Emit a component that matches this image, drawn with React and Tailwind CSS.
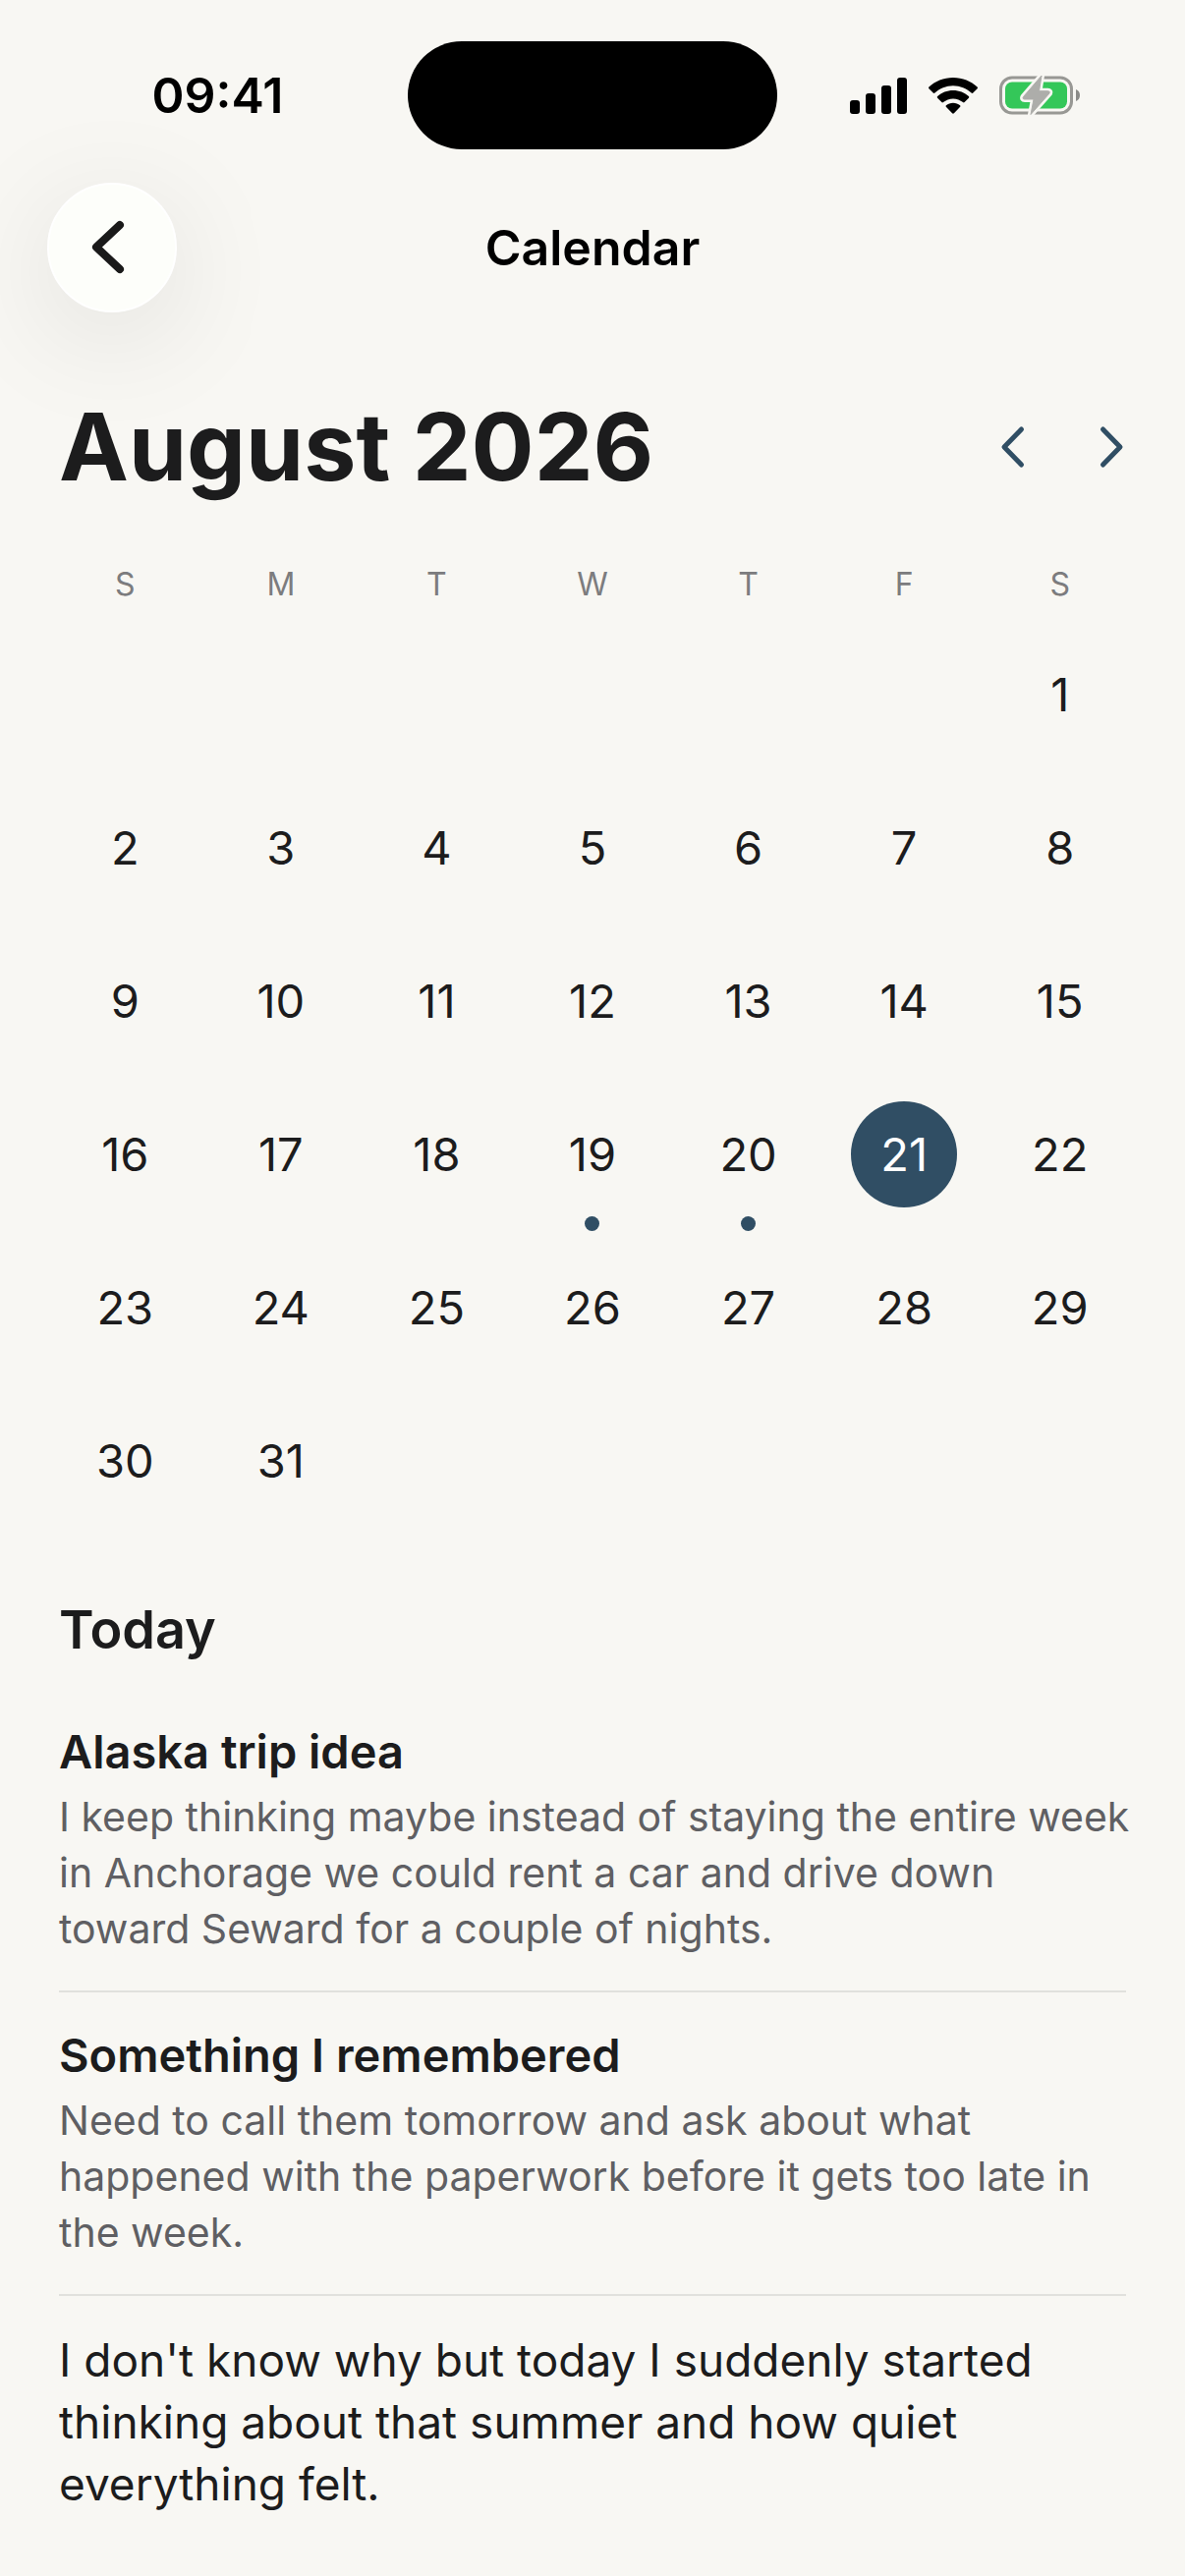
import { useState } from "react";
import clsx from "clsx";

const TODAY = new Date(2026, 7, 21);
const DAYS_WITH_ENTRIES = ["2026-7-19", "2026-7-20"];
const WEEKDAYS = ["Sunday", "Monday", "Tuesday", "Wednesday", "Thursday", "Friday", "Saturday"];

const ENTRIES = [
  {
    id: 1,
    title: "Alaska trip idea",
    body: "I keep thinking maybe instead of staying the entire week\nin Anchorage we could rent a car and drive down\ntoward Seward for a couple of nights.",
  },
  {
    id: 2,
    title: "Something I remembered",
    body: "Need to call them tomorrow and ask about what\nhappened with the paperwork before it gets too late in\nthe week.",
  },
  {
    id: 3,
    body: "I don't know why but today I suddenly started\nthinking about that summer and how quiet\neverything felt.",
  },
];

const dayKey = (date) => `${date.getFullYear()}-${date.getMonth()}-${date.getDate()}`;

// ─────────────────────────────────────────────────────────────────────────────
// Status bar
// ─────────────────────────────────────────────────────────────────────────────
function SignalIcon() {
  return (
    <svg className="w-[58px] h-[39px]" viewBox="0 0 58 39" fill="black">
      <rect x="0" y="24" width="10" height="14" rx="3" />
      <rect x="16" y="17" width="10" height="21" rx="3" />
      <rect x="32" y="9" width="10" height="29" rx="3" />
      <rect x="48" y="1" width="10" height="37" rx="3" />
    </svg>
  );
}

function WifiIcon() {
  return (
    <svg className="w-[52px] h-[39px]" viewBox="0 0 52 39" fill="black">
      <path d="M26 1c9.600 0 18.300 3.600 24.600 9.600.5.500.5 1.200 0 1.700l-4.300 4.300c-.5.500-1.200.500-1.700 0C39.700 12 33.200 9.200 26 9.200S12.300 12 7.400 16.600c-.5.500-1.200.500-1.700 0l-4.300-4.300c-.5-.5-.5-1.200 0-1.700C7.700 4.600 16.400 1 26 1Z" />
      <path d="M26 14c6.100 0 11.700 2.300 15.900 6.100.5.500.5 1.200 0 1.700l-4.300 4.300c-.5.500-1.100.5-1.600 0-2.700-2.300-6.200-3.700-10-3.700s-7.300 1.400-10 3.700c-.5.500-1.100.500-1.600 0l-4.300-4.300c-.5-.5-.5-1.200 0-1.700C14.300 16.300 19.900 14 26 14Z" />
      <path d="M26 26.700c2.700 0 5.200.9 7.100 2.500.5.500.5 1.100.1 1.600l-6.300 6.500c-.5.500-1.300.500-1.800 0l-6.300-6.500c-.4-.5-.4-1.100.1-1.600 1.900-1.600 4.400-2.500 7.100-2.500Z" />
    </svg>
  );
}

function BatteryIcon() {
  const bolt = "M43 0 24.500 21.500Q23.200 24 26 24H35L32 39.500 51 18Q52 15.700 49.500 15.700H40.500Z";

  return (
    <svg className="w-[83px] h-[40px]" viewBox="0 0 83 40">
      <rect x="1.500" y="2" width="72" height="36" rx="11.500" fill="none" stroke="#989894" strokeWidth="3" />
      <path d="M78 14c2.600 1 4 3.200 4 6s-1.400 5-4 6Z" fill="#8b8b88" />
      <rect x="6" y="6.500" width="63" height="27" rx="7" fill="#34c759" />
      <path d={bolt} fill="#f8f7f3" stroke="#f8f7f3" strokeWidth="6" strokeLinejoin="round" />
      <path d={bolt} fill="#adadaa" stroke="#adadaa" strokeWidth="1" strokeLinejoin="round" />
    </svg>
  );
}

function StatusBar() {
  return (
    <div className="grid grid-cols-[1fr_376px_1fr] items-center text-black">
      <time className="pl-7 text-center text-[50px] leading-[60px] font-semibold">09:41</time>
      <div className="h-[110px] rounded-full bg-black" />
      <div className="flex items-center justify-center gap-[21px] pr-8">
        <SignalIcon />
        <WifiIcon />
        <BatteryIcon />
      </div>
    </div>
  );
}

// ─────────────────────────────────────────────────────────────────────────────
// Navigation
// ─────────────────────────────────────────────────────────────────────────────
function NavBar() {
  return (
    <header className="mt-[34px] grid grid-cols-[1fr_auto_1fr] items-center px-12">
      <button
        type="button"
        aria-label="Back"
        className="flex size-[132px] items-center justify-center rounded-full border-2 border-white bg-[#fdfefa] shadow-[0_24px_120px_rgba(0,0,0,0.1)]"
      >
        <svg className="w-12 h-[60px]" viewBox="0 0 48 60" fill="none" stroke="#1a1a1a">
          <path strokeLinecap="round" strokeLinejoin="round" strokeWidth={8} d="M32 7 8 29.500 32 52" />
        </svg>
      </button>
      <h1 className="text-[50px] leading-[60px] font-semibold text-black">Calendar</h1>
    </header>
  );
}

function MonthHeader({ month, onChange }) {
  const label = month.toLocaleDateString("en-US", { month: "long", year: "numeric" });

  return (
    <div className="flex items-center justify-between">
      <h2 className="text-[95px] leading-[120px] font-bold">{label}</h2>
      <div className="flex gap-[70px] text-[#304e64]">
        <button type="button" aria-label="Previous month" onClick={() => onChange(-1)}>
          <svg className="w-[30px] h-12" viewBox="0 0 30 48" fill="none" stroke="currentColor">
            <path strokeLinecap="round" strokeLinejoin="round" strokeWidth={5} d="M23.500 6 6 24l17.500 18" />
          </svg>
        </button>
        <button type="button" aria-label="Next month" onClick={() => onChange(1)}>
          <svg className="w-[30px] h-12" viewBox="0 0 30 48" fill="none" stroke="currentColor">
            <path strokeLinecap="round" strokeLinejoin="round" strokeWidth={5} d="M6.500 6 24 24 6.500 42" />
          </svg>
        </button>
      </div>
    </div>
  );
}

// ─────────────────────────────────────────────────────────────────────────────
// Month grid
// ─────────────────────────────────────────────────────────────────────────────
function Day({ date, selected, onSelect }) {
  const hasEntries = DAYS_WITH_ENTRIES.includes(dayKey(date));

  return (
    <button type="button" onClick={() => onSelect(date)} className="flex h-[132px] flex-col items-center justify-between">
      <span
        className={clsx(
          "flex size-[108px] items-center justify-center rounded-full text-[47px] leading-[60px]",
          selected && "bg-[#304e64] text-white"
        )}
      >
        {date.getDate()}
      </span>
      {hasEntries && <span className="size-[15px] rounded-full bg-[#304e64]" />}
    </button>
  );
}

function MonthGrid({ month, selected, onSelect }) {
  const year = month.getFullYear();
  const index = month.getMonth();
  const blanks = Array.from({ length: month.getDay() });
  const days = Array.from({ length: new Date(year, index + 1, 0).getDate() }, (_, i) => new Date(year, index, i + 1));

  return (
    <>
      <div className="mt-14 grid grid-cols-7 gap-6 text-center text-[32px] leading-[48px] text-[#7c7c7e]">
        {WEEKDAYS.map((name) => (
          <abbr key={name} aria-label={name} className="no-underline">
            {name[0]}
          </abbr>
        ))}
      </div>
      <div className="mt-[34px] grid grid-cols-7 gap-6">
        {blanks.map((_, i) => (
          <div key={i} />
        ))}
        {days.map((date) => (
          <Day key={dayKey(date)} date={date} selected={dayKey(date) === dayKey(selected)} onSelect={onSelect} />
        ))}
      </div>
    </>
  );
}

// ─────────────────────────────────────────────────────────────────────────────
// Entries of the selected day
// ─────────────────────────────────────────────────────────────────────────────
function Entry({ title, body }) {
  return (
    <article className="border-b-2 border-[#e1e1dd] pt-[34px] pb-[34px] first:pt-0 last:border-b-0">
      {title && <h4 className="mb-2 text-[47px] leading-[60px] font-semibold">{title}</h4>}
      <p
        className={clsx(
          "-mr-3 whitespace-pre-line",
          title ? "text-[41px] leading-[57px] text-[#5f5f63]" : "text-[46px] leading-[63px]"
        )}
      >
        {body}
      </p>
    </article>
  );
}

function App() {
  const [month, setMonth] = useState(new Date(2026, 7, 1));
  const [selected, setSelected] = useState(TODAY);

  const handleMonthChange = (step) => {
    setMonth((current) => new Date(current.getFullYear(), current.getMonth() + step, 1));
  };

  return (
    <div className="min-h-screen bg-[#f8f7f3] pt-[42px] font-['Inter',sans-serif] text-[#1c1c1d]">
      <StatusBar />
      <NavBar />
      <main className="mt-[77px] px-[60px]">
        <MonthHeader month={month} onChange={handleMonthChange} />
        <MonthGrid month={month} selected={selected} onSelect={setSelected} />

        <section className="mt-[58px]">
          <h3 className="mb-[58px] text-[54px] leading-[72px] font-semibold">Today</h3>
          <div>
            {ENTRIES.map((entry) => (
              <Entry key={entry.id} title={entry.title} body={entry.body} />
            ))}
          </div>
        </section>
      </main>
    </div>
  );
}

export default App;
